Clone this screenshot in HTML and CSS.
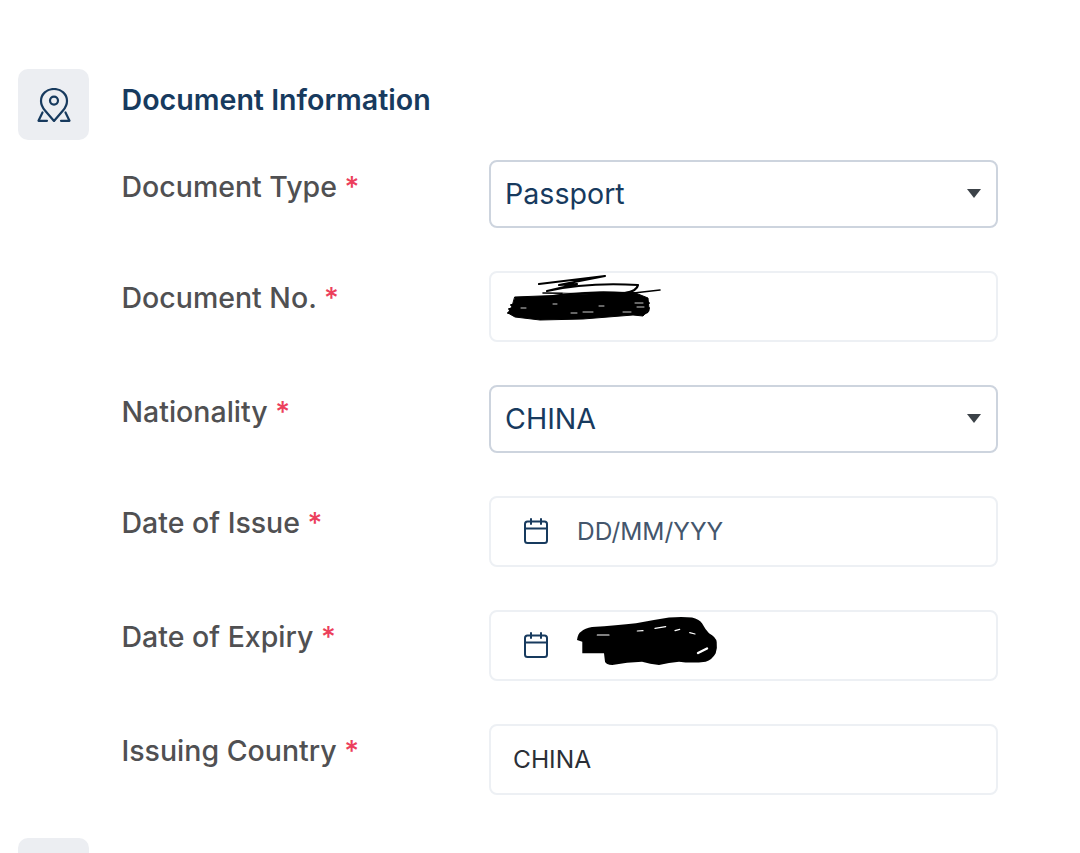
FILE: index.html
```html
<!DOCTYPE html>
<html lang="en">
<head>
<meta charset="utf-8">
<title>Document Information</title>
<link rel="stylesheet" href="styles.css">
</head>
<body>
<main class="page">
  <section class="section">
    <div class="section-icon">
      <svg class="pin" viewBox="0 0 34 34" fill="none" stroke="#173a5e" stroke-width="2.2" stroke-linecap="round" stroke-linejoin="round">
        <path d="M17 33 L8 22.5 C5.5 19.5 4 16.5 4 13 C4 6 9.8 1 17 1 C24.2 1 30 6 30 13 C30 16.5 28.5 19.5 26 22.5 Z"/>
        <circle cx="17" cy="12.6" r="4"/>
        <path d="M5.5 24.5 L1.5 32.8 H10"/>
        <path d="M28.5 24.5 L32.5 32.8 H24"/>
      </svg>
    </div>
    <div class="section-body">
      <h2 class="section-title">Document Information</h2>
      <div class="form">
        <div class="row">
          <div class="label">Document Type <span class="req">*</span></div>
          <div class="field field-select"><span class="value">Passport</span><span class="caret"></span></div>
        </div>
        <div class="row">
          <div class="label">Document No. <span class="req">*</span></div>
          <div class="field field-input">
            <svg class="scribble-a" viewBox="0 0 155 45" fill="none" stroke="#000" stroke-linecap="round" stroke-linejoin="round">
              <path d="M32 8 L98 0 L52 9 L70 8 L40 15 Q80 6 131 9 Q130 15 118 17 Q80 15 46 20" stroke-width="2.2"/>
              <path d="M153 14 L118 18 L36 17" stroke-width="1.6"/>
              <path d="M8 21 L60 19 L126 16 L141 22 L142 33 L136 40 L126 39 L76 43 L33 44 L8 41 L1 37 L5 30 Z" fill="#000" stroke-width="1"/>
              <path d="M4 29 H16 M1 37 H12 M2 33 H10 M136 24 L142 27 M134 38 Q142 38 142 32" stroke-width="1.8"/>
              <path d="M14 32 H19 M46 28 H50 M64 37 H70 M76 36 H86 M92 30 H97 M116 36 H124 M128 27 H136 M130 31 H137" stroke="#fff" stroke-width="0.8"/>
              <path d="M68 14 L108 11 M56 17 L100 14" stroke="#fff" stroke-width="0.7"/>
            </svg>
          </div>
        </div>
        <div class="row">
          <div class="label">Nationality <span class="req">*</span></div>
          <div class="field field-select"><span class="value">CHINA</span><span class="caret"></span></div>
        </div>
        <div class="row">
          <div class="label">Date of Issue <span class="req">*</span></div>
          <div class="field field-input">
            <svg class="cal" viewBox="0 0 24 26" fill="none" stroke="#173a5e" stroke-width="2" stroke-linecap="round" stroke-linejoin="round">
              <rect x="1" y="3.5" width="22" height="21.5" rx="2.5"/>
              <path d="M1 10.5 H23 M7 1 V6 M17 1 V6"/>
            </svg>
            <span class="placeholder">DD/MM/YYY</span>
          </div>
        </div>
        <div class="row">
          <div class="label">Date of Expiry <span class="req">*</span></div>
          <div class="field field-input">
            <svg class="cal" viewBox="0 0 24 26" fill="none" stroke="#173a5e" stroke-width="2" stroke-linecap="round" stroke-linejoin="round">
              <rect x="1" y="3.5" width="22" height="21.5" rx="2.5"/>
              <path d="M1 10.5 H23 M7 1 V6 M17 1 V6"/>
            </svg>
            <svg class="scribble-b" viewBox="0 0 140 48">
              <path d="M0 23 Q1 16 4 14.7 Q8 11 15 10 Q40 8.5 59 6.3 Q76 3 92 0.5 Q105 -0.5 115 0.5 Q122 2 125 6.3 Q128 12 132 16.3 Q139 20 139.7 25 Q140.5 31 138.7 36.3 Q135 43 128.7 44.7 Q115 46.5 102 44.7 Q92 45.5 82 48 Q73 47 65 44.7 Q50 45 35.3 48 Q29 47.5 28 44.7 L27 36.3 L5.3 36.3 L5.3 24.7 Z" fill="#000"/>
              <path d="M20.3 18 H32 M60.3 14 L66 13.7 M78 11.3 L88.7 9.7 M98 13.7 L102.7 12.3 M112.7 15.7 L118 17" stroke="#fff" stroke-width="1.2" fill="none" stroke-linecap="round"/>
              <path d="M121 36 L130 31.5" stroke="#fff" stroke-width="2.4" fill="none" stroke-linecap="round"/>
            </svg>
          </div>
        </div>
        <div class="row">
          <div class="label">Issuing Country <span class="req">*</span></div>
          <div class="field field-input"><span class="plain">CHINA</span></div>
        </div>
      </div>
    </div>
  </section>
  <section class="section section-next">
    <div class="section-icon"></div>
  </section>
</main>
</body>
</html>
```

FILE: styles.css
```css
html, body {
  margin: 0;
  padding: 0;
  background: #fff;
}
body {
  font-family: Inter, "Noto Sans", sans-serif;
}
.page {
  box-sizing: border-box;
  height: 853px;
  overflow: hidden;
  padding: 69px 0 0 18px;
}
.section {
  display: flex;
  gap: 32.5px;
}
.section-next {
  margin-top: 43.5px;
}
.section-icon {
  width: 71px;
  height: 71px;
  flex: none;
  display: flex;
  align-items: center;
  justify-content: center;
  border-radius: 10px;
  background: #eceef2;
}
.pin {
  width: 34px;
  height: 34px;
}
.section-body {
  width: 876.5px;
}
.section-title {
  margin: 0 0 29px;
  font-size: 28.6px;
  line-height: 62px;
  font-weight: 600;
  color: #173a5e;
}
.form {
  display: flex;
  flex-direction: column;
  gap: 43.5px;
}
.row {
  display: grid;
  grid-template-columns: 367.5px 509px;
}
.label {
  font-size: 28.5px;
  line-height: 54px;
  font-weight: 500;
  color: #505052;
}
.req {
  color: #ec3f5c;
}
.field {
  display: flex;
  align-items: center;
  box-sizing: border-box;
  background: #fff;
  border-radius: 8px;
}
.field-select {
  justify-content: space-between;
  height: 67.5px;
  padding: 0 15px 0 14px;
  border: 2px solid #cdd4de;
}
.field-input {
  height: 70.5px;
  border: 2px solid #edf0f4;
}
.value {
  font-size: 28.6px;
  color: #173a5e;
}
.caret {
  width: 0;
  height: 0;
  border-left: 7px solid transparent;
  border-right: 7px solid transparent;
  border-top: 9px solid #3c4248;
}
.cal {
  width: 24px;
  height: 26px;
  flex: none;
  margin-left: 33px;
}
.placeholder {
  margin-left: 29px;
  font-size: 24.5px;
  color: #44566c;
}
.plain {
  margin-left: 22px;
  font-size: 24.5px;
  color: #2b2f36;
}
.scribble-a {
  width: 155px;
  height: 45px;
  flex: none;
  align-self: flex-start;
  margin: 3px 0 0 16px;
  overflow: visible;
}
.scribble-b {
  width: 140px;
  height: 48px;
  flex: none;
  margin-left: 29px;
  align-self: flex-start;
  margin-top: 5px;
  overflow: visible;
}
```
